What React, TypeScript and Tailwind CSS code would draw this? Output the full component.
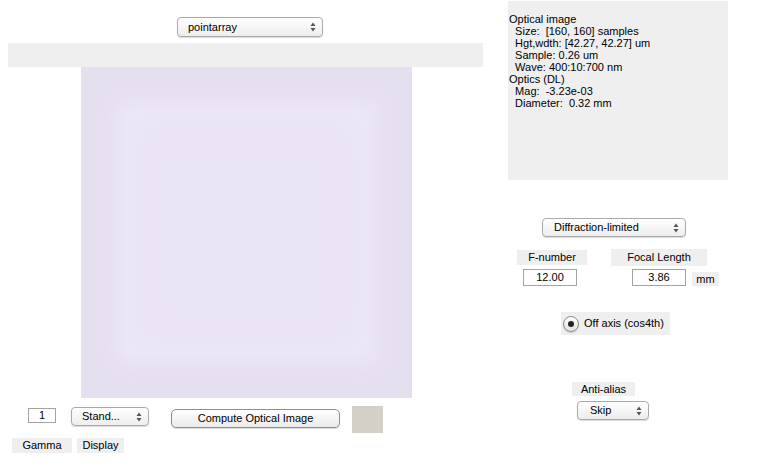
import React from 'react'

const font = { fontFamily: '"Liberation Sans", Arial, sans-serif' }

function Arrows() {
  return (
    <svg width="6" height="10" viewBox="0 0 6 10" className="shrink-0">
      <path d="M3 0.5 L5.5 4 L0.5 4 Z" fill="#555" />
      <path d="M3 9.5 L5.5 6 L0.5 6 Z" fill="#555" />
    </svg>
  )
}

function Popup({ label, className }: { label: string; className: string }) {
  return (
    <div
      className={`flex items-center justify-between rounded-[4px] border border-[#a9a9a9] bg-gradient-to-b from-white to-[#ededed] pl-[10px] pr-[6px] text-[11px] text-black shadow-[0_1px_1px_rgba(0,0,0,0.15)] ${className}`}
    >
      <span>{label}</span>
      <Arrows />
    </div>
  )
}

function Field({ value, className }: { value: string; className: string }) {
  return (
    <div className={`flex items-center justify-center border border-[#a3a3a3] bg-white text-[11px] text-black ${className}`}>
      {value}
    </div>
  )
}

function Label({ text, className }: { text: string; className: string }) {
  return (
    <div className={`flex items-center justify-center bg-[#efefef] text-[11px] text-black ${className}`}>
      {text}
    </div>
  )
}

const info = [
  'Optical image',
  '  Size:  [160, 160] samples',
  '  Hgt,wdth: [42.27, 42.27] um',
  '  Sample: 0.26 um',
  '  Wave: 400:10:700 nm',
  'Optics (DL)',
  '  Mag:  -3.23e-03',
  '  Diameter:  0.32 mm',
]

export default function App() {
  return (
    <div style={font} className="flex w-[757px] h-[474px] bg-white overflow-hidden">
      {/* left side: scene image and display controls */}
      <div className="flex flex-col w-[508px] shrink-0">
        <Popup label="pointarray" className="mt-[17px] ml-[177px] w-[146px] h-[20px]" />
        <div className="mt-[6px] ml-[8px] w-[475px] h-[24px] bg-[#efefef]" />
        <div className="ml-[81px] w-[331px] h-[331px] bg-[#e6dff0] p-[48px] overflow-hidden">
          <div className="w-full h-full bg-[#e9e2f3] shadow-[0_0_20px_12px_#eee7fb,inset_0_0_30px_10px_#ede6fa]" />
        </div>
        <div className="flex items-start mt-[8px]">
          <Field value="1" className="mt-[2px] ml-[28px] w-[28px] h-[15px]" />
          <Popup label="Stand..." className="mt-[1px] ml-[15px] w-[78px] h-[19px]" />
          <button className="mt-[3px] ml-[22px] w-[169px] h-[19px] rounded-[5px] border border-[#8f8f8f] bg-gradient-to-b from-white to-[#ebebeb] text-[11px] text-black shadow-[0_1px_1px_rgba(0,0,0,0.15)]">
            Compute Optical Image
          </button>
          <div className="ml-[12px] w-[31px] h-[27px] bg-[#d4d0c8]" />
        </div>
        <div className="flex mt-[5px]">
          <Label text="Gamma" className="ml-[12px] w-[60px] h-[15px]" />
          <Label text="Display" className="ml-[5px] w-[47px] h-[15px]" />
        </div>
      </div>

      {/* right side: info panel and optics controls */}
      <div className="flex flex-col w-[249px]">
        <div className="mt-[1px] w-[220px] h-[179px] bg-[#efefef] pl-[1px] pt-[12px] text-[11px] leading-[12px] text-black">
          {info.map((line, i) => (
            <div key={i} className="whitespace-pre">{line}</div>
          ))}
        </div>
        <Popup label="Diffraction-limited" className="mt-[38px] ml-[34px] w-[144px] h-[19px] !pl-[11px]" />
        <div className="flex items-start mt-[12px]">
          <Label text="F-number" className="mt-[1px] ml-[9px] w-[70px] h-[15px]" />
          <Label text="Focal Length" className="ml-[24px] w-[96px] h-[17px]" />
        </div>
        <div className="flex items-start mt-[3px]">
          <Field value="12.00" className="ml-[15px] w-[54px] h-[17px]" />
          <Field value="3.86" className="ml-[55px] w-[54px] h-[17px]" />
          <Label text="mm" className="mt-[3px] ml-[6px] w-[27px] h-[14px]" />
        </div>
        <div className="flex items-center mt-[26px] ml-[53px] w-[109px] h-[23px] bg-[#efefef] pl-[2px] text-[11px] text-black">
          <div className="flex items-center justify-center w-[16px] h-[16px] rounded-full border border-[#8a8a8a] bg-gradient-to-b from-white to-[#e2e2e2] shadow-[0_1px_1px_rgba(0,0,0,0.15)]">
            <div className="w-[6px] h-[6px] rounded-full bg-[#222]" />
          </div>
          <span className="ml-[5px]">Off axis (cos4th)</span>
        </div>
        <Label text="Anti-alias" className="mt-[47px] ml-[64px] w-[63px] h-[14px]" />
        <Popup label="Skip" className="mt-[5px] ml-[69px] w-[72px] h-[19px] !pl-[12px]" />
      </div>
    </div>
  )
}
